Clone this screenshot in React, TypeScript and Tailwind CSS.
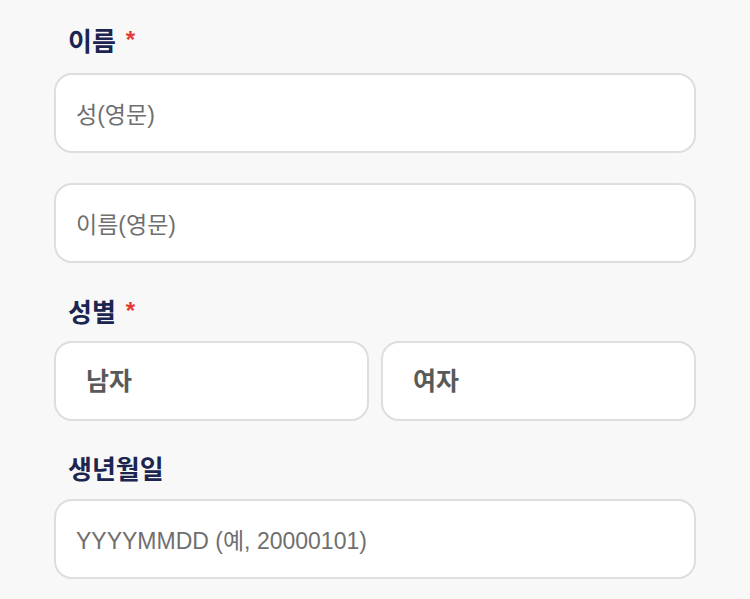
const Label = ({ text, required }: { text: string; required?: boolean }) => (
  <div className="flex items-center h-[30px] pl-[14px] text-[26px] font-bold text-[#1b2550] leading-[30px]">
    <span className="mt-[3px]">{text}</span>
    {required && <span className="ml-[10px] -mt-[1px] text-[#e53935] text-[24px]">*</span>}
  </div>
);

const TextField = ({ placeholder }: { placeholder: string }) => (
  <input
    type="text"
    placeholder={placeholder}
    className="w-full h-[80px] rounded-[18px] border-2 border-[#dedede] bg-white px-[20px] pt-[5px] text-[23px] text-[#333] placeholder:text-[#6f6f6f] outline-none"
  />
);

const App = () => {
  return (
    <div
      className="min-h-[599px] w-[750px] bg-[#f8f8f8] px-[54px] pt-[25px]"
      style={{ fontFamily: '"Liberation Sans", "Noto Sans CJK KR", sans-serif' }}
    >
      {/* 이름 */}
      <Label text="이름" required />
      <div className="mt-[18px] flex flex-col gap-[30px]">
        <TextField placeholder="성(영문)" />
        <TextField placeholder="이름(영문)" />
      </div>

      {/* 성별 */}
      <div className="mt-[33px]">
        <Label text="성별" required />
      </div>
      <div className="mt-[15px] grid grid-cols-2 gap-[12px]">
        <button className="h-[80px] rounded-[18px] border-2 border-[#dedede] bg-white pl-[30px] pt-[2px] text-left text-[25px] font-bold text-[#595959]">
          남자
        </button>
        <button className="h-[80px] rounded-[18px] border-2 border-[#dedede] bg-white pl-[30px] pt-[2px] text-left text-[25px] font-bold text-[#595959]">
          여자
        </button>
      </div>

      {/* 생년월일 */}
      <div className="mt-[32px]">
        <Label text="생년월일" />
      </div>
      <div className="mt-[16px]">
        <TextField placeholder="YYYYMMDD (예, 20000101)" />
      </div>
    </div>
  );
};

export default App;
